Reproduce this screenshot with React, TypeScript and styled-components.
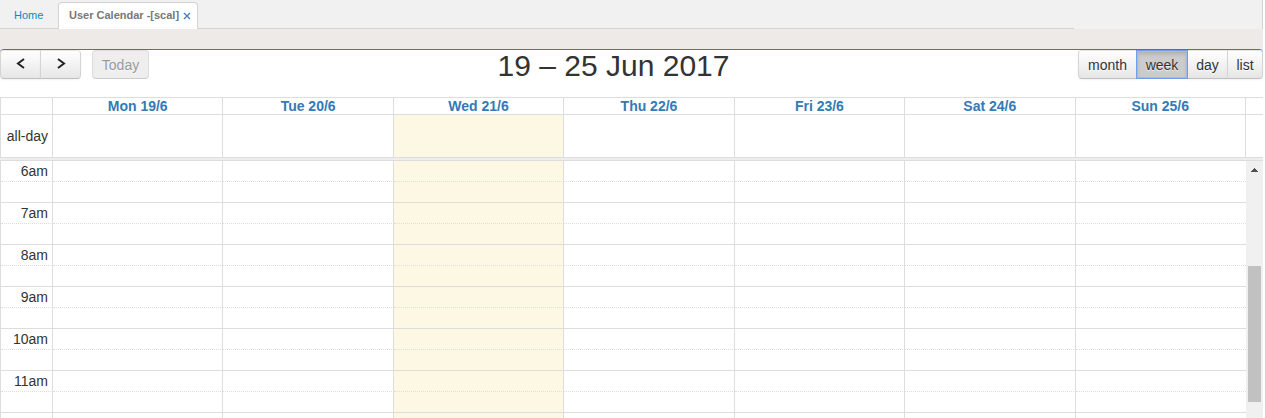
import React from "react";
import styled, { createGlobalStyle, css } from "styled-components";

const line = "#dddddd";

const GlobalStyle = createGlobalStyle`
  *, *::before, *::after { box-sizing: border-box; }
  body {
    margin: 0;
    background: #ffffff;
    color: #333333;
    font-family: "Liberation Sans", Arial, sans-serif;
    font-size: 14px;
    line-height: 20px;
  }
`;

const Page = styled.div`
  display: flex;
  flex-direction: column;
  height: 100vh;
  overflow: hidden;
  padding-right: 2px;
`;

const TabBar = styled.nav`
  display: flex;
  flex: none;
  height: 29px;
  padding-top: 2px;
  background: #f1f1f1;
  border-right: 1px solid #d3d3d3;
  font-size: 11px;
  line-height: 26px;
`;

const TabLead = styled.div`
  width: 58px;
  padding-left: 14px;
  border-bottom: 1px solid #d3d3d3;
`;

const HomeLink = styled.a`
  color: #0d86d0;
  text-decoration: none;
`;

const ActiveTab = styled.div`
  display: flex;
  gap: 4px;
  padding: 0 6px 0 10px;
  border: 1px solid #d3d3d3;
  border-bottom: 0;
  border-radius: 4px 4px 0 0;
  background: #ffffff;
  color: #777777;
  font-weight: bold;
  line-height: 24px;
`;

const CloseButton = styled.button`
  display: flex;
  align-items: center;
  padding: 0;
  border: 0;
  background: none;
  color: #4a7fc0;
`;

const TabRule = styled.div`
  flex: 1;
  margin-right: 188px;
  border-bottom: 1px solid #d3d3d3;
`;

const Band = styled.div`
  flex: none;
  height: 20px;
  background: #eeeae7;
`;

const Surface = styled.div`
  flex: none;
  background: #eeeae7;
`;

const Toolbar = styled.header`
  display: flex;
  justify-content: space-between;
  align-items: flex-start;
  height: 48px;
  border-top: 1px solid #337ab7;
  border-radius: 4px 4px 0 0;
  background: #ffffff;
`;

const Actions = styled.div`
  display: flex;
  gap: 11px;
`;

const Group = styled.div`
  display: flex;
`;

const Button = styled.button<{ $active?: boolean; $width: number }>`
  display: flex;
  align-items: center;
  justify-content: center;
  width: ${(p) => p.$width}px;
  height: 29px;
  padding: 0;
  border: 1px solid;
  border-color: #e6e6e6 #d4d4d4 #bfbfbf;
  background: linear-gradient(#ffffff, #e6e6e6);
  color: #333333;
  font: inherit;
  text-shadow: 0 1px 1px rgba(255, 255, 255, 0.75);
  box-shadow: inset 0 1px 0 rgba(255, 255, 255, 0.2), 0 1px 2px rgba(0, 0, 0, 0.05);

  & + & { margin-left: -1px; }
  &:first-child { border-top-left-radius: 4px; border-bottom-left-radius: 4px; }
  &:last-child { border-top-right-radius: 4px; border-bottom-right-radius: 4px; }
  &:disabled {
    background: #eeeeee;
    color: #999999;
    border-color: #dddddd #dddddd #cccccc;
    box-shadow: none;
  }
  ${(p) =>
    p.$active &&
    css`
      position: relative;
      background: #cccccc;
      border-color: #6f9fe8;
      box-shadow: inset 0 0 0 1px #9dbcec, inset 0 3px 4px rgba(0, 0, 0, 0.15);
    `}
`;

const ArrowButton = styled(Button)`
  padding-bottom: 2px;
`;

const Title = styled.h2`
  margin: 0;
  font-size: 30px;
  font-weight: normal;
  line-height: 32px;
`;

const Grid = styled.table`
  flex: 1;
  width: 100%;
  border-collapse: separate;
  border-spacing: 0;
  table-layout: fixed;
  border-left: 1px solid ${line};
`;

const AxisCol = styled.col`
  width: 52px;
`;

const GutterCol = styled.col`
  width: 17px;
`;

const DayHead = styled.th`
  height: 18px;
  padding: 0;
  border-top: 1px solid ${line};
  border-bottom: 1px solid ${line};
  border-right: 1px solid ${line};
  line-height: 16px;
  &:last-child { border-right: 0; }
`;

const DayLink = styled.a`
  color: #337ab7;
  text-decoration: none;
`;

const Cell = styled.td<{ $today?: boolean; $half?: boolean }>`
  padding: 0;
  border-right: 1px solid ${line};
  border-bottom: 1px ${(p) => (p.$half ? "dotted" : "solid")} ${line};
  background: ${(p) => (p.$today ? "#fcf8e3" : "#ffffff")};
  &:last-child { border-right: 0; }
`;

const AllDayCell = styled(Cell)`
  height: 43px;
`;

const SlotCell = styled(Cell)`
  height: 21px;
`;

const AxisAllDay = styled(AllDayCell)`
  padding-right: 4px;
  text-align: right;
`;

const AxisSlot = styled(SlotCell)`
  padding-right: 4px;
  text-align: right;
`;

const Divider = styled.div`
  flex: none;
  height: 3px;
  border-bottom: 1px solid ${line};
  background: #eeeeee;
`;

const HeadArea = styled.div`
  flex: none;
  display: flex;
`;

const Scroller = styled.main`
  display: flex;
  align-items: flex-start;
  flex: 1;
  min-height: 0;
  overflow: hidden;
`;

const ScrollTrack = styled.div`
  display: flex;
  flex-direction: column;
  align-items: center;
  align-self: stretch;
  flex: none;
  width: 17px;
  padding: 7px 2px 16px;
  background: #f0f0f0;
`;

const ScrollThumb = styled.div`
  width: 13px;
  height: 136px;
  margin-top: 94px;
  background: #c1c1c1;
`;

const days = ["Mon 19/6", "Tue 20/6", "Wed 21/6", "Thu 22/6", "Fri 23/6", "Sat 24/6", "Sun 25/6"];
const hours = ["6am", "7am", "8am", "9am", "10am", "11am", ""];
const today = "Wed 21/6";

function Chevron({ d }: { d: string }) {
  return (
    <svg width="10" height="11" viewBox="0 0 10 11" fill="none" stroke="#222" strokeWidth="2" aria-hidden="true">
      <path d={d} />
    </svg>
  );
}

export default function App() {
  return (
    <>
      <GlobalStyle />
      <Page>
        <TabBar>
          <TabLead>
            <HomeLink href="#home">Home</HomeLink>
          </TabLead>
          <ActiveTab>
            <span>User Calendar -[scal]</span>
            <CloseButton aria-label="Close tab">
              <svg width="8" height="8" viewBox="0 0 8 8" fill="none" stroke="currentColor" strokeWidth="1.4" aria-hidden="true">
                <path d="M1 1L7 7M7 1L1 7" />
              </svg>
            </CloseButton>
          </ActiveTab>
          <TabRule />
        </TabBar>
        <Band />
        <Surface>
          <Toolbar>
            <Actions>
              <Group>
                <ArrowButton $width={41} aria-label="Previous week">
                  <Chevron d="M8 1L2 5.5L8 10" />
                </ArrowButton>
                <ArrowButton $width={41} aria-label="Next week">
                  <Chevron d="M2 1L8 5.5L2 10" />
                </ArrowButton>
              </Group>
              <Group>
                <Button $width={57} disabled>
                  Today
                </Button>
              </Group>
            </Actions>
            <Title>19 – 25 Jun 2017</Title>
            <Actions>
              <Group>
                <Button $width={59}>month</Button>
                <Button $width={52} $active>
                  week
                </Button>
                <Button $width={41}>day</Button>
                <Button $width={36}>list</Button>
              </Group>
            </Actions>
          </Toolbar>
        </Surface>
        <HeadArea>
          <Grid>
            <colgroup>
              <AxisCol />
              {days.map((d) => (
                <col key={d} />
              ))}
              <GutterCol />
            </colgroup>
            <thead>
              <tr>
                <DayHead />
                {days.map((d) => (
                  <DayHead key={d} scope="col">
                    <DayLink href="#day">{d}</DayLink>
                  </DayHead>
                ))}
                <DayHead />
              </tr>
            </thead>
            <tbody>
              <tr>
                <AxisAllDay>all-day</AxisAllDay>
                {days.map((d) => (
                  <AllDayCell key={d} $today={d === today} />
                ))}
                <AllDayCell />
              </tr>
            </tbody>
          </Grid>
        </HeadArea>
        <Divider />
        <Scroller>
          <Grid>
            <colgroup>
              <AxisCol />
              {days.map((d) => (
                <col key={d} />
              ))}
            </colgroup>
            <tbody>
              {hours.map((h) => (
                <React.Fragment key={h}>
                  <tr>
                    <AxisSlot $half>{h}</AxisSlot>
                    {days.map((d) => (
                      <SlotCell key={d} $half $today={d === today} />
                    ))}
                  </tr>
                  <tr>
                    <AxisSlot />
                    {days.map((d) => (
                      <SlotCell key={d} $today={d === today} />
                    ))}
                  </tr>
                </React.Fragment>
              ))}
            </tbody>
          </Grid>
          <ScrollTrack>
            <svg width="7" height="4" viewBox="0 0 7 4" fill="#505050" aria-hidden="true">
              <path d="M3 0H4V1H5V2H6V3H7V4H0V3H1V2H2V1H3Z" />
            </svg>
            <ScrollThumb />
          </ScrollTrack>
        </Scroller>
      </Page>
    </>
  );
}
